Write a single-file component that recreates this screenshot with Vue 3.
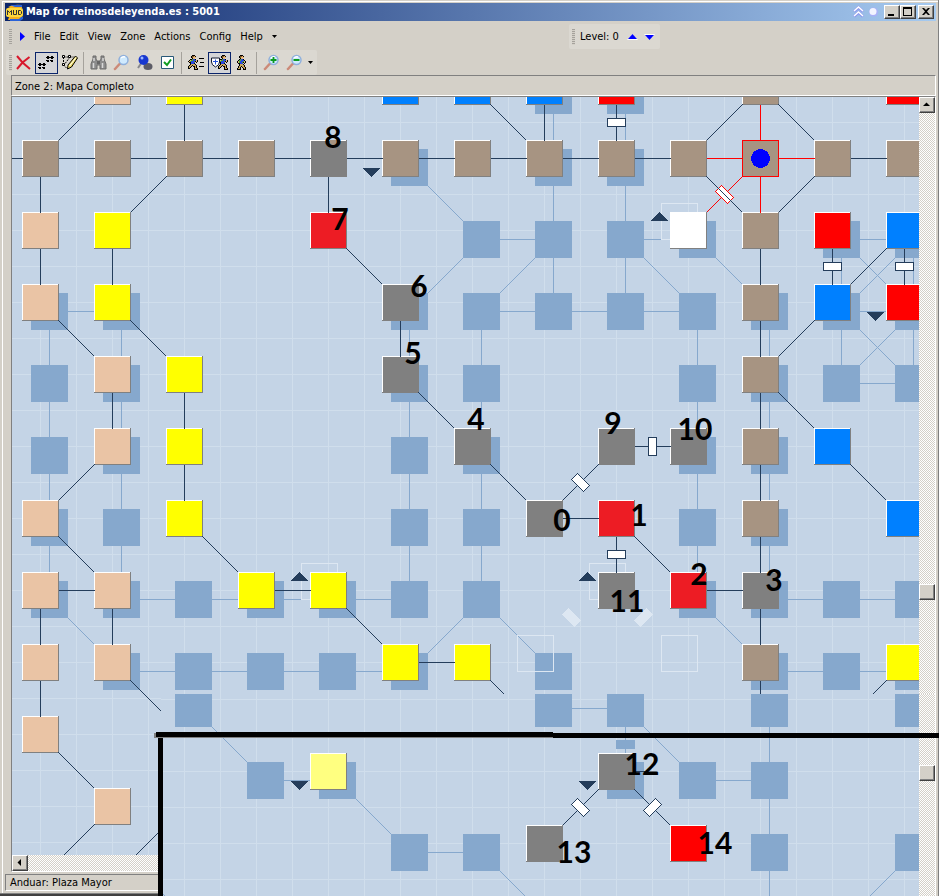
<script setup>
const TILE = 37
const STEP = 72
const colors = {
  p: '#eac4a5', y: '#ffff00', b: '#0080ff', r: '#ff0000', n: '#a79482',
  g: '#808080', e: '#ed1c24', w: '#ffffff', l: '#ffff80'
}

// Each row lists "column + colour"; a trailing s adds the level-below room, "sh" is a lower room alone.
const mainRows = {
  '-1': '1p 2y 5b 6b 7bs 8rs 10n 12r',
  0: '0n 1n 2n 3n 4g 5ns 6n 7ns 8ns 9n 10n 11n 12n',
  1: '0p 1y 4e 6sh 7sh 8sh 9ws 10n 11rs 12bs',
  2: '0ps 1ys 5gs 6sh 7sh 8sh 9sh 10ns 11bs 12rs',
  3: '0sh 1ps 2y 5gs 6sh 9sh 10ns 11sh 12sh',
  4: '0sh 1ps 2y 5sh 6gs 8g 9gs 10ns 11b',
  5: '0ps 1sh 2y 5sh 6sh 7g 8e 9sh 10ns 12b',
  6: '0ps 1ps 2sh 3ys 4ys 5sh 6sh 8g 9es 10gs 11sh 12sh',
  7: '0p 1ps 2sh 3sh 4sh 5ys 6y 7sh 10ns 11sh 12ys',
  8: '0p',
  9: '1p'
}
const lowerRows = {
  0: '2sh 7sh 8sh 10sh 12sh',
  1: '3sh 4ls 8gs 9sh 10sh',
  2: '5sh 6sh 7g 9r 10sh 12sh'
}

function rooms(rows, top) {
  const tiles = []
  const below = []
  for (const [row, list] of Object.entries(rows)) {
    for (const token of list.split(' ')) {
      const [, col, kind] = token.match(/^(\d+)(\w+)$/)
      const x = 22 + STEP * Number(col)
      const y = top + STEP * Number(row)
      if (kind !== 'sh') tiles.push({ x, y, fill: colors[kind[0]] })
      if (kind.includes('s')) below.push({ x: x + 9, y: y + 9 })
    }
  }
  return { tiles, below }
}

// An edge "c,r>c,r" becomes a line between facing sides or corners of two rooms.
function edges(text, top, shift = 0) {
  return text.trim().split(/\s+/).map((item) => {
    const [c1, r1, c2, r2] = item.split(/[,>]/).map(Number)
    const dx = Math.sign(c2 - c1)
    const dy = Math.sign(r2 - r1)
    const cx1 = 40.5 + STEP * c1 + shift
    const cy1 = top + 18.5 + STEP * r1 + shift
    const cx2 = 40.5 + STEP * c2 + shift
    const cy2 = top + 18.5 + STEP * r2 + shift
    return { x1: cx1 + 18 * dx, y1: cy1 + 18 * dy, x2: cx2 - 18 * dx, y2: cy2 - 18 * dy }
  })
}

const main = rooms(mainRows, 140)
const lower = rooms(lowerRows, 681)

const mainBelow = edges(`
  0,2>0,3 0,3>0,4 0,4>0,5 0,5>0,6 1,2>1,3 1,3>1,4 1,4>1,5 1,5>1,6 0,2>1,2
  7,-1>7,0 7,0>7,1 7,1>7,2 8,-1>8,0 8,0>8,1 8,1>8,2 6,1>7,1 8,1>9,1
  6,2>7,2 7,2>8,2 8,2>9,2 5,0>6,1 6,1>5,2 7,1>6,2 8,1>9,2 9,1>10,2
  5,2>5,3 5,3>5,4 5,4>5,5 5,5>5,6 6,2>6,3 6,3>6,4 6,4>6,5 6,5>6,6
  9,2>9,3 9,3>9,4 9,4>9,5 9,5>9,6 10,2>10,3 10,3>10,4 10,4>10,5 10,5>10,6
  11,1>12,1 11,2>12,2 11,3>12,3 11,1>12,2 12,1>11,2 11,2>12,3 12,2>11,3
  11,1>11,2 11,2>11,3 12,1>12,2 12,2>12,3 10,6>11,6 11,6>12,6 10,7>11,7 11,7>12,7
  1,6>2,6 2,6>3,6 3,6>4,6 4,6>5,6 0,6>1,7 1,7>2,7 2,7>3,7 3,7>4,7 4,7>5,7
  6,6>5,7 6,6>7,7 9,6>10,7`, 140, 9)
const red = edges('9,0>10,0 10,0>11,0 10,-1>10,0 10,0>10,1 10,0>9,1', 140)
const mainEdges = edges(`
  -1,0>0,0 0,0>1,0 1,0>2,0 2,0>3,0 3,0>4,0 4,0>5,0 5,0>6,0 6,0>7,0 7,0>8,0 8,0>9,0 11,0>12,0
  2,-1>2,0 0,0>0,1 0,1>0,2 1,1>1,2 4,0>4,1 7,-1>7,0 8,-1>8,0
  10,1>10,2 10,2>10,3 10,3>10,4 10,4>10,5 10,5>10,6 10,6>10,7 10,7>10,8
  11,1>11,2 12,1>12,2 5,2>5,3 1,3>1,4 2,3>2,4 2,4>2,5 8,5>8,6 0,6>0,7 1,6>1,7 0,7>0,8
  8,4>9,4 7,5>8,5 0,6>1,6 3,6>4,6 9,6>10,6 5,7>6,7
  1,-1>0,0 2,0>1,1 6,-1>7,0 10,-1>9,0 10,-1>11,0 11,0>10,1 12,1>11,2 11,2>10,3
  0,2>1,3 1,2>2,3 4,1>5,2 5,3>6,4 6,4>7,5 8,4>7,5 8,5>9,6 10,3>11,4 11,4>12,5
  1,4>0,5 0,5>1,6 2,5>3,6 4,6>5,7 1,7>2,8 6,7>7,8 12,7>11,8 0,8>1,9 1,9>0,10 2,9>1,10`, 140)
const crossing = edges('9,0>10,1', 140)
const lowerBelow = edges(`
  2,0>3,1 3,1>4,1 4,1>5,2 5,2>6,2 6,2>7,3 7,0>8,0 8,0>8,1 8,0>9,1 9,1>10,1
  10,0>10,1 10,1>10,2 10,2>10,3 12,2>11,3 1,2>2,3`, 681, 9)
const lowerEdges = edges('8,1>7,2 8,1>9,2', 681)

const mainDoors = [
  { x: 616.5, y: 122.5, a: 0 }, { x: 832.5, y: 266.5, a: 0 }, { x: 904.5, y: 266.5, a: 0 },
  { x: 616.5, y: 554.5, a: 0 }, { x: 652.5, y: 446.5, a: 90 }
]
const outlines = [[661, 203], [301, 563], [589, 563], [517, 635], [661, 635]]
const mainArrows = ['M363 168h17l-8.500 9z', 'M867 312h17l-8.500 9z', 'M651 221h17l-8.500-9z', 'M291 581h17l-8.500-9z', 'M579 581h17l-8.500-9z']
const mainLabels = [
  [8, 333, 148], [7, 340, 230], [6, 419, 297], [5, 413, 364], [4, 476, 430], [9, 613, 434],
  [0, 562, 531], [10, 695, 440], [1, 639, 526], [2, 699, 585], [3, 774, 591], [11, 627, 612]
]
const lowerLabels = [[12, 642, 775], [13, 574, 863], [14, 715, 854]]

const menus = ['File', 'Edit', 'View', 'Zone', 'Actions', 'Config', 'Help']

// Small bitmap drawings for the toolbar figures.
const palette = {
  k: '#000000', h: '#7a5220', s: '#e8b878', y: '#c8a860', b: '#2848e0', g: '#4aa838'
}
const walker = [
  '...kkk....',
  '..khhsk...',
  '..khsss...',
  '...kss....',
  '..kgbbk...',
  '.kggbbbk..',
  'ksgbbbgsk.',
  'ksgbbgksk.',
  '.kkbbb.k..',
  '..kyyyk...',
  '..kyyyyk..',
  '.kyykyyk..',
  '.kyk.kyyk.',
  'kyyk..kyk.',
  'kkkk..kkk.'
]
const runner = [
  '....kkk...',
  '...khhsk..',
  '...khsss..',
  '....kss...',
  '..kkgbbk..',
  '.ksggbbbsk',
  'ksgbbbgksk',
  '.kkbbbb.k.',
  '..kbbbk...',
  '..kyyyyk..',
  '.kyykyyyk.',
  'kyyk.kkyk.',
  'kyk...kyk.',
  'kk....kyyk',
  '......kkkk'
]
const steps = [
  '.........##..##.',
  '........########',
  '.........##..##.',
  '................',
  '........###.###.',
  '.........##..##.',
  '................',
  '.##..##.........',
  '########........',
  '.##..##.........',
  '................',
  '###.###.........',
  '.##..##.........'
]
function dots(map, ox, oy) {
  const out = []
  map.forEach((line, y) => [...line].forEach((ch, x) => {
    if (ch !== '.') out.push({ x: x + ox, y: y + oy, fill: palette[ch] || '#000000' })
  }))
  return out
}
const tools = [
  { id: 'delete', label: 'Delete' },
  { id: 'steps', label: 'Follow', on: true, px: dots(steps, 0, 2) },
  { id: 'edit', label: 'Draw' },
  { id: 'sep' },
  { id: 'find', label: 'Find' },
  { id: 'lens', label: 'Search' },
  { id: 'pin', label: 'Locate' },
  { id: 'check', label: 'Options' },
  { id: 'sep' },
  { id: 'run', label: 'Run', px: dots(runner, 0, 1) },
  { id: 'guard', label: 'Safe walk', on: true, px: dots(runner, 7, 1) },
  { id: 'walk', label: 'Walk', px: dots(walker, 3, 1) },
  { id: 'sep' },
  { id: 'in', label: 'Zoom in' },
  { id: 'out', label: 'Zoom out' }
]
</script>

<template>
  <div class="window">
    <header class="title">
      <svg class="logo" width="18" height="17" viewBox="0 0 18 17">
        <path d="M2 3q5-3 14-2v3H4z" fill="#f5b020" /><path d="M4 1h12v2H9z" fill="#2a62d8" />
        <path d="M3 13h13l-2 3H2z" fill="#f5b020" /><path d="M4 15h9l2-2h2v2l-3 2H4z" fill="#2a62d8" />
        <rect x="0" y="4" width="17" height="9" rx="2" fill="#ffd83c" />
        <path d="M1.500 11V6.500l2 2 2-2V11M7.500 6v4.500h3V6M12.500 6.500h2l1 1v2l-1 1h-2z" fill="none" stroke="#303030" />
      </svg>
      <h1>Map for reinosdeleyenda.es : 5001</h1>
      <svg class="extras" width="26" height="14" viewBox="0 0 26 14">
        <path d="M1 6.500l4.500-4 4.500 4M1 11.500l4.500-4 4.500 4" fill="none" stroke="#8f98f0" stroke-width="3" />
        <path d="M1 6l4.500-4 4.500 4M1 11l4.500-4 4.500 4" fill="none" stroke="#fff" stroke-width="1.500" />
        <circle cx="20.500" cy="7" r="4.500" fill="#aab0f8" /><circle cx="20" cy="6.500" r="3.500" fill="#f2f4ff" />
      </svg>
      <div class="caption">
        <button class="raised" aria-label="Minimize"><svg width="12" height="10"><path d="M2 7h6v2H2z" /></svg></button>
        <button class="raised" aria-label="Maximize"><svg width="12" height="10"><path d="M1 0h9v9H1zM2 2v6h7V2z" fill-rule="evenodd" /></svg></button>
        <button class="raised close" aria-label="Close"><svg width="12" height="10"><path d="M2 1h2l2 2 2-2h2L7 4.500 10 8H8L6 6 4 8H2l3-3.500z" /></svg></button>
      </div>
    </header>

    <div class="menurow">
      <nav class="menu">
        <span class="grip"></span>
        <svg width="6" height="9" class="play"><path d="M1 0l5 4.500L1 9z" fill="#00f" /></svg>
        <button v-for="m in menus" :key="m">{{ m }}</button>
        <svg width="5" height="3" class="caret"><path d="M0 0h5L2.500 3z" /></svg>
      </nav>
      <div class="level">
        <span class="grip"></span>
        <span>Level: 0</span>
        <button aria-label="Level up"><svg width="11" height="6"><path d="M0 6h11L5.500 0z" fill="#fff" /><path d="M1 5h9L5.500 0z" fill="#00f" /></svg></button>
        <button aria-label="Level down"><svg width="11" height="6"><path d="M0 0h11L5.500 6z" fill="#fff" /><path d="M1 1h9L5.500 6z" fill="#00f" /></svg></button>
      </div>
    </div>

    <div class="toolbar">
      <span class="grip"></span>
      <template v-for="(t, i) in tools" :key="i">
        <span v-if="t.id === 'sep'" class="sep"></span>
        <button v-else :class="['tool', { on: t.on }]" :aria-label="t.label">
          <svg width="17" height="17" viewBox="0 0 17 17">
            <path v-if="t.id === 'delete'" d="M2 2l5.500 6.500L15 15M2 15l5.500-6.500L14.500 3" fill="none" stroke="#d8182c" stroke-width="2" />
            <g v-if="t.px" shape-rendering="crispEdges">
              <rect v-for="(p, k) in t.px" :key="k" :x="p.x" :y="p.y" width="1" height="1" :fill="p.fill" />
            </g>
            <path v-if="t.id === 'run'" d="M11 4.500h5M12 8.500h4M11 12.500h5" stroke="#000" stroke-width="1" />
            <path v-if="t.id === 'guard'" d="M.5 4h8v4q0 3-4 5-4-2-4-5z" fill="#fff" stroke="#101830" />
            <path v-if="t.id === 'guard'" d="M4.500 5.500v5M2 7.500h5" stroke="#2450d8" stroke-width="1" />
            <g v-if="t.id === 'edit'">
              <path d="M2.500 3v8M2.500 3h10M2.500 11l3 3M9 3l-6 8" fill="none" stroke="#000" stroke-dasharray="2 1" />
              <path d="M1.500 1.500h2v2h-2zM7.500 1.500h2v2h-2zM1.500 9.500h2v2h-2z" fill="#fff" stroke="#000" />
              <path d="M14.500 2l2 2-6 9-4 2 .5-4z" fill="#ecd85c" stroke="#000" stroke-width="1" /><path d="M15 3.500l-6.500 8.500" stroke="#fff" />
            </g>
            <g v-if="t.id === 'find'">
              <path d="M3 2h3v3l1 2h3l1-2V2h3v3l2 5v5h-6v-4H7v4H1v-5l2-5z" fill="#8c8c8c" stroke="#6c6c6c" />
              <path d="M4 4v3M3.500 9v5M13 4v3M12.500 9v5" stroke="#d8d8d8" stroke-width="1.500" /><path d="M7 7v3h3V7" fill="#666" />
            </g>
            <g v-if="['lens', 'in', 'out'].includes(t.id)">
              <path d="M7 9.500l-5 5.500" stroke="#cc8a78" stroke-width="2.500" stroke-linecap="round" />
              <circle cx="10.500" cy="6" r="4.500" fill="#cfeafe" stroke="#8fb0dc" stroke-width="1.500" />
              <path d="M8 4q2-2 4-1" stroke="#fff" fill="none" stroke-width="1.500" />
              <path v-if="t.id === 'in'" d="M10.500 3v6M7.500 6h6" stroke="#0a9a20" stroke-width="1.800" />
              <path v-if="t.id === 'out'" d="M7.500 6h6" stroke="#0a9a20" stroke-width="2" />
            </g>
            <g v-if="t.id === 'pin'">
              <ellipse cx="12" cy="12.500" rx="4.500" ry="3.500" fill="#5c5c66" />
              <path d="M6 8l-4 6" stroke="#88888c" stroke-width="2" />
              <circle cx="7.500" cy="6" r="5" fill="#1838d0" /><circle cx="6" cy="4" r="1.500" fill="#9cb8ff" />
            </g>
            <g v-if="t.id === 'check'">
              <path d="M2.500 2.500h12v12h-12z" fill="#fff" stroke="#285878" /><path d="M5 8l3 3 4-5.500" fill="none" stroke="#109c20" stroke-width="2" />
            </g>
          </svg>
        </button>
      </template>
      <svg width="5" height="3" class="caret"><path d="M0 0h5L2.500 3z" /></svg>
    </div>

    <div class="zone">Zone 2: Mapa Completo</div>

    <main class="view">
      <div class="pane">
        <svg class="map" width="100%" height="758" shape-rendering="crispEdges" role="img" aria-label="Mapa Completo">
          <defs>
            <pattern id="grid" x="4" y="14" width="36" height="36" patternUnits="userSpaceOnUse"><path d="M0 .5h36M.5 0v36" stroke="#d0deec" /></pattern>
          </defs>
          <g transform="translate(-12 -97)">
            <rect x="12" y="97" width="100%" height="758" fill="url(#grid)" />
            <rect v-for="(s, i) in main.below" :key="'s' + i" :x="s.x" :y="s.y" width="37" height="37" fill="#86a8cd" />
            <line v-for="(l, i) in mainBelow" :key="'b' + i" v-bind="l" stroke="#86a8cd" />
            <rect v-for="o in outlines" :key="o.join()" :x="o[0] + 0.5" :y="o[1] + 0.5" width="36" height="36" fill="none" stroke="#dde7f2" />
            <rect x="-8.500" y="-4.500" width="17" height="9" fill="#dde7f2" transform="translate(571.5 617.5) rotate(45)" />
            <rect x="-8.500" y="-4.500" width="17" height="9" fill="#dde7f2" transform="translate(643.5 617.5) rotate(-45)" />
            <g v-for="(t, i) in main.tiles" :key="'t' + i">
              <rect :x="t.x" :y="t.y" :width="TILE" :height="TILE" fill="#808080" />
              <rect :x="t.x" :y="t.y" width="36" height="36" fill="#fff" />
              <rect :x="t.x + 1" :y="t.y + 1" width="35" height="35" :fill="t.fill" />
            </g>
            <line v-for="(l, i) in mainEdges" :key="'e' + i" v-bind="l" stroke="#243d5b" />
            <line v-for="(l, i) in red" :key="'r' + i" v-bind="l" stroke="#f00" />
            <rect x="742.500" y="140.500" width="36" height="36" fill="none" stroke="#f00" />
            <circle cx="760.500" cy="158.500" r="9.500" fill="#00f" />
            <rect x="-8.500" y="-4.500" width="17" height="9" fill="#fff" stroke="#f00" transform="translate(724.5 194.5) rotate(45)" />
            <line v-for="(l, i) in crossing" :key="'x' + i" v-bind="l" stroke="#243d5b" />
            <rect v-for="(d, i) in mainDoors" :key="'d' + i" x="-9" y="-4" width="18" height="8" fill="#fff" stroke="#243d5b" :transform="`translate(${d.x} ${d.y}) rotate(${d.a})`" />
            <rect x="-8.500" y="-4.500" width="17" height="9" fill="#fff" stroke="#243d5b" transform="translate(580.5 482.5) rotate(45)" />
            <path v-for="a in mainArrows" :key="a" :d="a" fill="#243d5b" />
            <rect x="330" y="140" width="7" height="5" fill="#a79482" />
            <text v-for="n in mainLabels" :key="n[0]" :x="n[1]" :y="n[2]" class="num">{{ n[0] }}</text>
          </g>
        </svg>
        <div class="hscroll"><button class="raised" aria-label="Scroll left"><svg width="12" height="12"><path d="M7 2v7L3.500 5.500z" /></svg></button></div>
      </div>
      <div class="vscroll">
        <button class="raised" aria-label="Scroll up"><svg width="12" height="12"><path d="M2 7h7L5.500 3.500z" /></svg></button>
        <span class="raised thumb"></span>
      </div>
    </main>

    <footer class="status">Anduar: Plaza Mayor</footer>

    <section class="lower">
      <div class="lowermap">
        <svg width="100%" height="202" shape-rendering="crispEdges" role="img" aria-label="Mapa inferior">
          <defs>
            <pattern id="gridLower" x="4" y="15" width="36" height="36" patternUnits="userSpaceOnUse"><path d="M0 .5h36M.5 0v36" stroke="#d0deec" /></pattern>
          </defs>
          <g transform="translate(-161 -694)">
            <rect x="161" y="694" width="100%" height="202" fill="#c4d4e6" />
            <rect x="161" y="694" width="100%" height="202" fill="url(#gridLower)" />
            <rect v-for="(s, i) in lower.below" :key="'s' + i" :x="s.x" :y="s.y" width="37" height="37" fill="#86a8cd" />
            <line v-for="(l, i) in lowerBelow" :key="'b' + i" v-bind="l" stroke="#86a8cd" />
            <rect x="616" y="740" width="19" height="9" fill="#86a8cd" />
            <g v-for="(t, i) in lower.tiles" :key="'t' + i">
              <rect :x="t.x" :y="t.y" :width="TILE" :height="TILE" fill="#808080" />
              <rect :x="t.x" :y="t.y" width="36" height="36" fill="#fff" />
              <rect :x="t.x + 1" :y="t.y + 1" width="35" height="35" :fill="t.fill" />
            </g>
            <line v-for="(l, i) in lowerEdges" :key="'e' + i" v-bind="l" stroke="#243d5b" />
            <path d="M634 771.500h11" stroke="#243d5b" />
            <rect x="-8.500" y="-4.500" width="17" height="9" fill="#fff" stroke="#243d5b" transform="translate(580.5 807.5) rotate(45)" />
            <rect x="-8.500" y="-4.500" width="17" height="9" fill="#fff" stroke="#243d5b" transform="translate(652.5 807.5) rotate(-45)" />
            <path d="M291 781h17l-8.500 9zM579 781h17l-8.500 9z" fill="#243d5b" />
            <text v-for="n in lowerLabels" :key="n[0]" :x="n[1]" :y="n[2]" class="num">{{ n[0] }}</text>
          </g>
        </svg>
      </div>
      <div class="vscroll tail"><span class="raised thumb"></span></div>
      <div class="edge"></div>
      <svg class="rule" width="100%" height="202" shape-rendering="crispEdges" aria-hidden="true">
        <rect x="0" y="39" width="399" height="5" fill="#808080" />
        <rect x="2" y="38" width="397" height="5" />
        <rect x="399" y="39" width="100%" height="5" />
        <rect x="4" y="44" width="5" height="158" />
      </svg>
    </section>
  </div>
</template>

<style>
body {
  margin: 0;
  background: #d4d0c8;
}
</style>

<style scoped>
.window {
  position: relative;
  display: flex;
  flex-direction: column;
  padding: 3px;
  background: #d4d0c8;
  box-shadow: inset 0 -2px #404040, inset -1px -3px #808080, inset 2px 1px #d4d0c8, inset 3px 2px #fff;
  font: 11px/14px "DejaVu Sans Condensed", "DejaVu Sans", sans-serif;
  color: #000;
  overflow: hidden;
}
button {
  margin: 0;
  padding: 0;
  border: 0;
  background: none;
  font: inherit;
  color: inherit;
}
svg {
  display: block;
}
.title {
  display: flex;
  align-items: center;
  height: 18px;
  margin-left: 2px;
  padding-right: 2px;
  background: linear-gradient(90deg, #0a246a, #a6caf0);
}
.title h1 {
  flex: 1;
  margin: 0 0 0 2px;
  font-size: 11px;
  line-height: 18px;
  color: #fff;
}
.logo {
  margin-left: 1px;
}
.extras {
  margin-right: 5px;
}
.caption {
  display: flex;
}
.caption .raised {
  width: 16px;
  height: 14px;
}
.caption .close {
  margin-left: 2px;
}
.raised {
  box-sizing: border-box;
  display: block;
  padding: 1px;
  background: #d4d0c8;
  border: 1px solid;
  border-color: #fff #404040 #404040 #fff;
  box-shadow: inset -1px -1px 0 #808080;
}
.menurow {
  display: flex;
  align-items: center;
  box-sizing: border-box;
  height: 29px;
  padding-top: 2px;
}
.menu {
  display: flex;
  align-items: center;
  gap: 9px;
  width: 566px;
  box-sizing: border-box;
  padding-left: 6px;
}
.play {
  margin: 0 0 0 -2px;
}
.grip {
  width: 3px;
  height: 16px;
  background: repeating-linear-gradient(#a5a29c 0 1px, #d4d0c8 1px 2px);
}
.level {
  display: flex;
  align-items: center;
  height: 25px;
  padding: 0 5px 0 3px;
  border-radius: 2px;
  background: #dbd8d1;
}
.level span + span {
  width: 40px;
  margin: 0 7px 0 5px;
}
.level button + button {
  margin-left: 6px;
}
.toolbar {
  display: flex;
  align-items: center;
  align-self: flex-start;
  height: 25px;
  margin-left: 3px;
  padding: 0 4px 0 3px;
  border-radius: 2px;
  background: #dbd8d1;
}
.tool {
  display: grid;
  place-items: center;
  box-sizing: border-box;
  width: 23px;
  height: 22px;
}
.tool.on {
  border: 1px solid #0a246a;
  background: #d4d5d8;
}
.sep {
  width: 1px;
  height: 22px;
  margin: 0 3px 0 2px;
  background: #a5a29c;
}
.toolbar .caret {
  margin-left: 2px;
}
.zone {
  box-sizing: border-box;
  height: 21px;
  margin-left: 8px;
  padding: 4px 3px 0;
  border: 1px solid;
  border-color: #808080 #fff #fff #808080;
}
.view {
  display: flex;
  margin-left: 8px;
  border: 1px solid;
  border-color: #808080 #fff #fff #808080;
}
.pane {
  flex: 1;
  min-width: 0;
}
.map {
  background: #c4d4e6;
}
.num {
  font: bold 30px Lato, "Open Sans", sans-serif;
  text-anchor: middle;
}
.hscroll,
.vscroll {
  background: repeating-conic-gradient(#fff 0 25%, #d4d0c8 0 50%) 0 0 / 2px 2px;
}
.hscroll,
.hscroll .raised,
.vscroll .raised {
  height: 16px;
}
.hscroll .raised,
.vscroll,
.vscroll .raised {
  width: 16px;
}
.vscroll .thumb {
  margin-top: 471px;
}
.status {
  box-sizing: border-box;
  height: 17px;
  margin: 2px 0 2px 2px;
  padding: 1px 4px 0;
  border: 1px solid;
  border-color: #808080 #fff #fff #808080;
}
.lower {
  position: absolute;
  left: 154px;
  right: 0;
  bottom: 0;
  height: 202px;
  display: flex;
}
.lowermap {
  flex: 1;
  min-width: 0;
  margin-left: 7px;
}
.tail .thumb {
  margin-top: 71px;
}
.edge {
  box-sizing: border-box;
  width: 4px;
  border-left: 1px solid #fff;
  border-right: 1px solid #808080;
  background: #d4d0c8;
}
.rule {
  position: absolute;
  inset: 0;
  pointer-events: none;
}
</style>
